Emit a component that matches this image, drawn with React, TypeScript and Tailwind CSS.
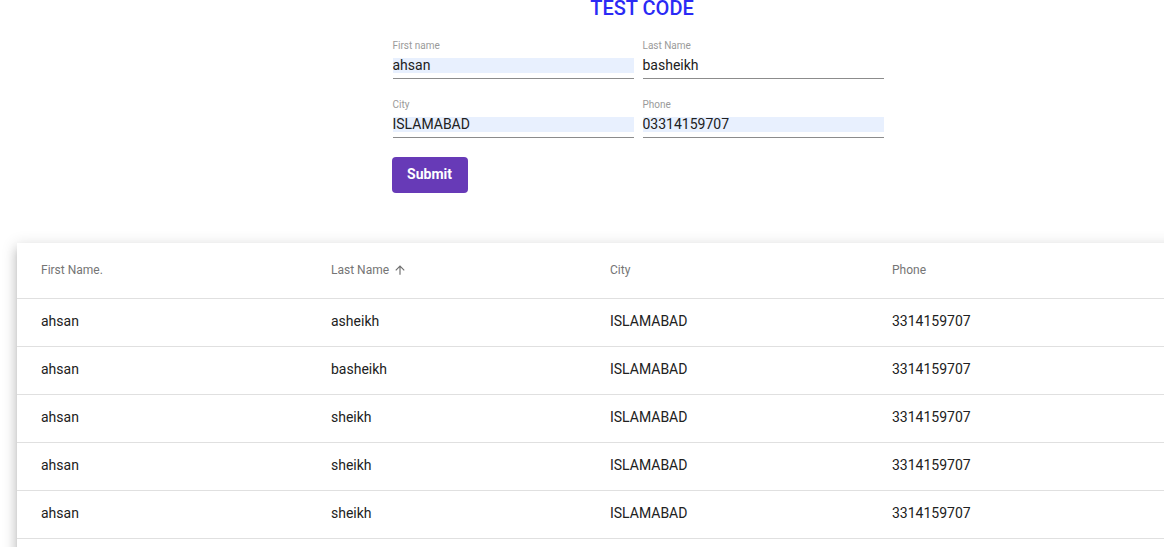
const rows = [
  { first: "ahsan", last: "asheikh", city: "ISLAMABAD", phone: "3314159707" },
  { first: "ahsan", last: "basheikh", city: "ISLAMABAD", phone: "3314159707" },
  { first: "ahsan", last: "sheikh", city: "ISLAMABAD", phone: "3314159707" },
  { first: "ahsan", last: "sheikh", city: "ISLAMABAD", phone: "3314159707" },
  { first: "ahsan", last: "sheikh", city: "ISLAMABAD", phone: "3314159707" },
  { first: "ahsan", last: "sheikh", city: "ISLAMABAD", phone: "3314159707" },
]

function Field({ label, value, filled }: { label: string; value: string; filled?: boolean }) {
  return (
    <div className="flex flex-col border-b border-[#8c8c8c] pb-[5px]">
      <span className="pt-px text-[10px] leading-[12px] text-[#9a9a9a]">{label}</span>
      <div
        className={
          "mt-[6px] h-[15px] text-[14px] leading-[15px] text-[#212121] " +
          (filled ? "bg-[#e8f0fe]" : "bg-white")
        }
      >
        {value}
      </div>
    </div>
  )
}

function SortArrow() {
  return (
    <svg width="14" height="14" viewBox="0 0 24 24" className="ml-[4px] fill-[#6f6f6f]">
      <path d="M4 12l1.41 1.41L11 7.83V20h2V7.83l5.58 5.59L20 12l-8-8-8 8z" />
    </svg>
  )
}

export default function App() {
  return (
    <div className="h-[547px] w-[1164px] overflow-hidden bg-white font-['Roboto',sans-serif]">
      <div className="flex w-[1276px] flex-col items-center">
        <h1 className="-mt-[4px] pl-[8px] text-[20px] font-medium leading-[24px] text-[#2a2af5]">TEST CODE</h1>

        <form className="mt-[19px] flex w-[491px] flex-col gap-[19px]">
          <div className="grid grid-cols-2 gap-x-[9px] gap-y-[19px]">
            <Field label="First name" value="ahsan" filled />
            <Field label="Last Name" value="basheikh" />
            <Field label="City" value="ISLAMABAD" filled />
            <Field label="Phone" value="03314159707" filled />
          </div>
          <div>
            <button
              type="button"
              className="-ml-px h-[36px] w-[76px] rounded-[4px] bg-[#673ab7] pb-px text-[14px] font-bold text-white"
            >
              Submit
            </button>
          </div>
        </form>

        <div className="mt-[50px] ml-[4px] w-[1246px] bg-white shadow-[0_5px_5px_-3px_rgba(0,0,0,0.2),0_8px_10px_1px_rgba(0,0,0,0.14),0_3px_14px_2px_rgba(0,0,0,0.12)]">
          <div className="grid h-[56px] grid-cols-[290px_279px_282px_1fr] items-center border-b border-[#e0e0e0] px-6 pb-[2px] text-[12px] text-[#757575]">
            <span>First Name.</span>
            <span className="flex items-center">
              Last Name
              <SortArrow />
            </span>
            <span>City</span>
            <span>Phone</span>
          </div>
          {rows.map((r, i) => (
            <div
              key={i}
              className="grid h-[48px] grid-cols-[290px_279px_282px_1fr] items-center border-b border-[#e0e0e0] px-6 pb-[2px] text-[14px] text-[#212121]"
            >
              <span>{r.first}</span>
              <span>{r.last}</span>
              <span>{r.city}</span>
              <span>{r.phone}</span>
            </div>
          ))}
        </div>
      </div>
    </div>
  )
}
